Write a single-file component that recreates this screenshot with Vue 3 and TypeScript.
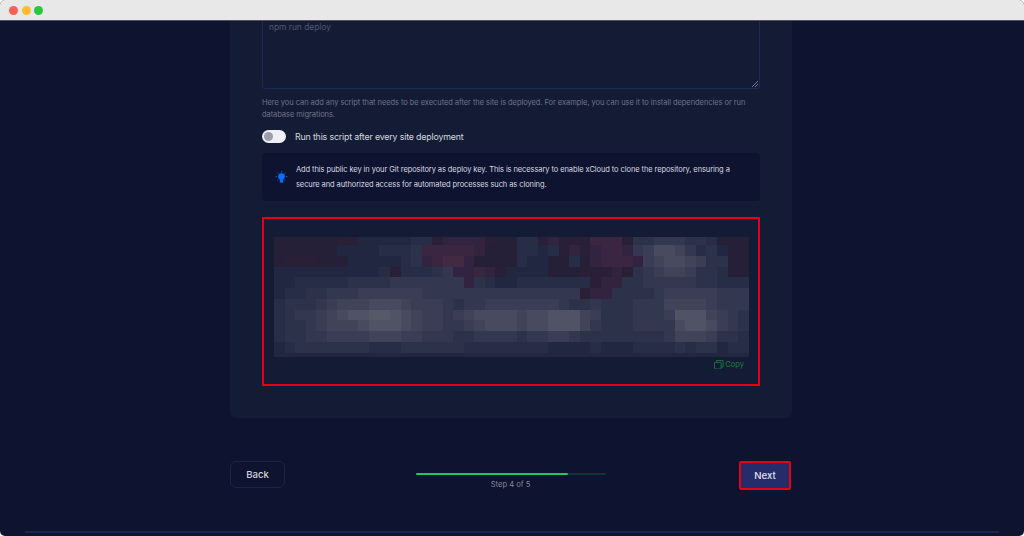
<script setup lang="ts">
const gray: Record<string, string> = {
  '0': '#1f2540', '1': '#222741', '2': '#272c47', '3': '#2d324b', '4': '#333750',
  '5': '#3a3d55', '6': '#414459', '7': '#484a60', '8': '#505265', '9': '#585968',
  a: '#261f38', b: '#292038', c: '#322340', d: '#3a2640', e: '#422a42'
}
const rows: string[] = [
  'aaaaaabb1111122bccccbaa' + '22bcbbbdddb33444332aaa',
  'aaaaaa1111222' + '3dddddcaaa' + '2212bcbcddc457764231aa',
  'abbbaaa1111123cdeecaaaa' + '211aa2acdddc56776533aa',
  '11111111112b22234ccdcb1' + '111aaabbbcb345665332aa',
  '112222233334444444c3211' + '2222222bcc334444433222',
  '12233444555555444444444' + '444444bcc3333455555444',
  '23334566677765554344555' + '5555433433344466665444',
  '23445678899876554567777' + '6778886533344458886543',
  '23345666788876554456777' + '6778886433344447887543',
  '23344555566655444334444' + '3445543333333346665332',
  '12333333322233333322222' + '2221111211122223233122',
  '11111111111111111111111' + '1111111111111111111111'
]
const cells = rows.flatMap((r, y) => r.split('').map((c, x) => ({ id: `${y}-${x}`, color: gray[c] })))
</script>

<template>
  <div class="window">
    <header class="titlebar">
      <i class="dot red"></i><i class="dot yellow"></i><i class="dot green"></i>
    </header>
    <main class="page">
      <section class="card">
        <div class="script-box">
          <span class="placeholder">npm run deploy</span>
          <svg class="grip" width="6" height="6" viewBox="0 0 6 6"><path d="M0 6 6 0M3 6l3-3" stroke="#8a8f9f" stroke-width="0.8" fill="none" /></svg>
        </div>
        <p class="help">Here you can add any script that needs to be executed after the site is deployed. For example, you can use it to install dependencies or run database migrations.</p>
        <div class="toggle-row">
          <span class="toggle"><span class="knob"></span></span>
          <span class="toggle-label">Run this script after every site deployment</span>
        </div>
        <div class="info">
          <svg class="bulb" width="13" height="13" viewBox="0 0 13 13">
            <circle cx="6.5" cy="5.6" r="3.3" fill="#0d6efd" />
            <rect x="4.8" y="8.4" width="3.4" height="3.2" fill="#0d6efd" />
            <path d="M6.5.2v1.2M2.6 1.6l.8.8M10.4 1.6l-.8.8M.5 5.6h1.3M11.2 5.6h1.3M2.6 9.4l.8-.8M10.4 9.4l-.8-.8" stroke="#0d6efd" stroke-width="0.9" fill="none" />
          </svg>
          <p>Add this public key in your Git repository as deploy key. This is necessary to enable xCloud to clone the repository, ensuring a secure and authorized access for automated processes such as cloning.</p>
        </div>
        <div class="key-box">
          <div class="mosaic">
            <span v-for="c in cells" :key="c.id" :style="{ background: c.color }"></span>
          </div>
          <div class="copy">
            <svg width="9.5" height="9.5" viewBox="0 0 10 10" fill="none" stroke="#15803d" stroke-width="0.9">
              <rect x="0.5" y="2.5" width="7" height="7" rx="0.6" />
              <path d="M2.5 2.5V.5h7v7h-2" />
            </svg>
            <span>Copy</span>
          </div>
        </div>
      </section>
      <nav class="footer">
        <button class="back">Back</button>
        <div class="progress">
          <div class="track"><div class="fill"></div></div>
          <span>Step 4 of 5</span>
        </div>
        <button class="next">Next</button>
      </nav>
      <div class="rule"></div>
    </main>
  </div>
</template>

<style>
html, body { margin: 0; background: #fff; }
</style>

<style scoped>
.window {
  width: 1024px;
  height: 536px;
  overflow: hidden;
  display: flex;
  flex-direction: column;
  border-radius: 5px;
  font-family: Inter, "Liberation Sans", sans-serif;
  background: #0e1330;
}
.titlebar {
  flex: none;
  height: 19px;
  padding-top: 1px;
  box-sizing: content-box;
  background: #e8e8e8;
  border-bottom: 1px solid #50525f;
  display: flex;
  align-items: center;
  gap: 3.5px;
  padding-left: 9px;
}
.dot { width: 9px; height: 9px; border-radius: 50%; }
.red { background: #fc5d57; }
.yellow { background: #fdbc2e; }
.green { background: #27c840; }
.page {
  flex: 1;
  display: flex;
  flex-direction: column;
  align-items: center;
  min-height: 0;
}
.card {
  width: 562px;
  height: 397px;
  flex: none;
  box-sizing: border-box;
  margin-right: 2px;
  padding: 0 32px;
  background: #141c35;
  border-radius: 0 0 6px 6px;
}
.script-box {
  position: relative;
  height: 68px;
  box-sizing: border-box;
  border: 1px solid #1c2a55;
  border-top: none;
  border-radius: 0 0 3px 3px;
  padding: 1px 6px;
}
.placeholder { font-size: 8.4px; line-height: 11px; color: #50566c; display: block; }
.grip { position: absolute; right: 1px; bottom: 1px; }
.help {
  margin: 8px 0 0;
  font-size: 7.5px;
  letter-spacing: -0.06px;
  line-height: 11.5px;
  color: #6d7389;
}
.toggle-row { display: flex; align-items: center; gap: 9px; margin-top: 10px; }
.toggle {
  width: 24px;
  height: 13px;
  border-radius: 7px;
  background: #eef0f6;
  display: flex;
  align-items: center;
  padding-left: 2px;
  box-sizing: border-box;
}
.knob { width: 9px; height: 9px; border-radius: 50%; background: #9a9eab; }
.toggle-label { font-size: 8.8px; letter-spacing: -0.16px; color: #d4d7df; }
.info {
  margin-top: 10px;
  height: 48px;
  box-sizing: border-box;
  background: #0e1330;
  border-radius: 4px;
  display: flex;
  align-items: center;
  gap: 8px;
  padding: 0 28px 0 13px;
}
.bulb { flex: none; }
.info p { margin: 0; font-size: 7.5px; letter-spacing: -0.09px; line-height: 15px; color: #d8dae2; }
.key-box {
  margin-top: 16px;
  height: 169px;
  box-sizing: border-box;
  border: 2px solid #e60012;
  padding: 18px 10px 0;
  display: flex;
  flex-direction: column;
}
.mosaic {
  display: grid;
  grid-template-columns: repeat(45, 10.56px);
  grid-template-rows: 8px repeat(10, 10.75px) 4px;
  width: 475px;
  filter: blur(0.4px);
}
.copy {
  align-self: flex-end;
  display: flex;
  align-items: center;
  gap: 1.5px;
  margin: 3px 4px 0 0;
  font-size: 7.6px;
  color: #15803d;
}
.footer {
  width: 562px;
  box-sizing: border-box;
  padding-right: 1px;
  margin-right: 2px;
  margin-top: 43px;
  flex: none;
  display: flex;
  align-items: flex-start;
  justify-content: space-between;
}
button { font-family: inherit; font-size: 9.6px; font-weight: 500; cursor: pointer; }
.back {
  width: 55px;
  height: 27px;
  background: transparent;
  border: 1px solid #1b2545;
  border-radius: 6px;
  color: #d0d2da;
}
.next {
  width: 52px;
  height: 29px;
  background: #252c6a;
  border: 2px solid #e60012;
  border-radius: 2px;
  color: #e0e2ec;
}
.progress {
  width: 190px;
  margin: 12px 0 0 -3px;
  display: flex;
  flex-direction: column;
  align-items: center;
  gap: 5px;
  font-size: 7.6px;
  color: #85889a;
}
.track { width: 100%; height: 2px; background: #123238; border-radius: 1px; }
.fill { width: 152px; height: 100%; background: #22c55e; border-radius: 1px; }
.rule { width: 974px; height: 2px; margin: 41px 1px 0 0; flex: none; background: #1a2450; }
</style>
